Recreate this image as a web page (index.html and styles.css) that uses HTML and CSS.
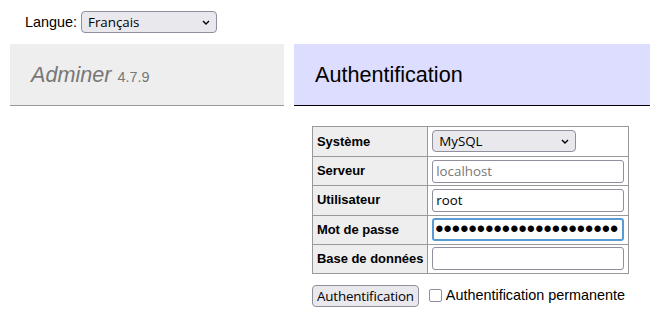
FILE: index.html
```html
<!DOCTYPE html>
<html lang="fr">
<head>
  <meta charset="UTF-8">
  <title>Authentification - Adminer</title>
  <link rel="stylesheet" href="styles.css">
</head>
<body>

  <form class="lang">
    <label for="lang">Langue:</label>
    <span class="select-wrap lang-select">
      <select id="lang"><option>Français</option></select>
      <svg class="chevron" viewBox="0 0 8 5" width="8" height="5"><path d="M1 1l3 3 3-3"/></svg>
    </span>
  </form>

  <div class="page">
    <div id="menu">
      <h1><a id="h1" href="#">Adminer</a> <span class="version">4.7.9</span></h1>
    </div>

    <div id="content">
      <h2>Authentification</h2>
      <form>
        <table class="login">
          <tr>
            <th>Système</th>
            <td>
              <span class="select-wrap driver-select">
                <select name="driver"><option>MySQL</option></select>
                <svg class="chevron" viewBox="0 0 8 5" width="8" height="5"><path d="M1 1l3 3 3-3"/></svg>
              </span>
            </td>
          </tr>
          <tr>
            <th>Serveur</th>
            <td><input class="field" name="server" placeholder="localhost"></td>
          </tr>
          <tr>
            <th>Utilisateur</th>
            <td><input class="field" name="username" value="root"></td>
          </tr>
          <tr>
            <th>Mot de passe</th>
            <td><input class="field focused" type="password" name="password" value="aaaaaaaaaaaaaaaaaaaaaa"></td>
          </tr>
          <tr>
            <th>Base de données</th>
            <td><input class="field" name="db"></td>
          </tr>
        </table>
        <p class="submit-row">
          <input class="btn" type="submit" value="Authentification">
          <label class="permanent"><input class="check" type="checkbox" name="auth[permanent]">Authentification permanente</label>
        </p>
      </form>
    </div>
  </div>

</body>
</html>
```

FILE: styles.css
```css
    :root {
      --menu-bg: #eee;
      --menu-border: #999;
      --head-bg: #ddf;
      --cell-border: #999;
      --ctl-bg: #e9e9ed;
      --ctl-border: #8f8f9d;
      --focus: #5b9bd5;
    }

    body {
      margin: 0;
      font: 14.4px/1.25 "Liberation Sans", Arial, sans-serif;
      color: #000;
      background: #fff;
    }

    .lang {
      display: flex;
      align-items: center;
      gap: 4px;
      height: 44px;
      padding: 0 25px;
      box-sizing: border-box;
    }

    .select-wrap {
      position: relative;
      display: block;
    }

    .select-wrap select {
      appearance: none;
      -webkit-appearance: none;
      display: block;
      width: 100%;
      height: 100%;
      margin: 0;
      padding: 0 20px 0 6px;
      box-sizing: border-box;
      font: 13.33px "Open Sans", "Noto Sans", sans-serif;
      color: #000;
      background: var(--ctl-bg);
      border: 1px solid var(--ctl-border);
      border-radius: 4px;
    }

    .chevron {
      position: absolute;
      top: 50%;
      right: 7px;
      margin-top: -2px;
      fill: none;
      stroke: #000;
      stroke-width: 1.4;
    }

    .lang-select {
      width: 136px;
      height: 22px;
    }

    .page {
      display: flex;
      gap: 10px;
      padding: 0 10px;
    }

    #menu {
      flex: none;
      width: 274px;
    }

    #menu h1 {
      margin: 0;
      padding: 17px 21px;
      font-size: 21.6px;
      line-height: 27px;
      font-weight: normal;
      color: #777;
      background: var(--menu-bg);
      border-bottom: 1px solid var(--menu-border);
    }

    #h1 {
      color: #777;
      font-style: italic;
      text-decoration: none;
    }

    .version {
      font-size: 14.4px;
      line-height: 1;
      color: #777;
    }

    #content {
      flex: 1;
    }

    h2 {
      margin: 0 0 20px;
      padding: 17px 21px;
      font-size: 21.6px;
      line-height: 27px;
      font-weight: normal;
      background: var(--head-bg);
      border-bottom: 1px solid #000;
    }

    .login {
      margin-left: 18px;
      border-collapse: collapse;
      font-size: 12.96px;
      line-height: 1.25;
    }

    .login th,
    .login td {
      border: 1px solid var(--cell-border);
      padding: 2.6px 3.9px;
    }

    .login th {
      background: var(--menu-bg);
      text-align: left;
    }

    .driver-select {
      width: 144px;
      height: 22px;
      margin-bottom: 2px;
    }

    .field {
      display: block;
      width: 192px;
      height: 23px;
      margin: 0;
      padding: 0 3px;
      box-sizing: border-box;
      font: 13.33px "Open Sans", "Noto Sans", sans-serif;
      color: #000;
      background: #fff;
      border: 1px solid var(--ctl-border);
      border-radius: 3px;
      outline: none;
    }

    .field::placeholder {
      color: #777;
    }

    .field.focused {
      border: 2px solid var(--focus);
      padding: 0 2px 0 1px;
      font: 23.5px "Liberation Sans", Arial, sans-serif;
      letter-spacing: 0.1px;
    }

    .submit-row {
      display: flex;
      align-items: center;
      margin: 11px 0 0 18px;
    }

    .btn {
      height: 22px;
      margin: 0 10px 0 0;
      padding: 0 4px;
      font: 13.33px "Open Sans", "Noto Sans", sans-serif;
      letter-spacing: -0.15px;
      color: #000;
      background: var(--ctl-bg);
      border: 1px solid var(--ctl-border);
      border-radius: 4px;
    }

    .permanent {
      display: flex;
      align-items: center;
      padding-bottom: 2px;
    }

    .check {
      appearance: none;
      -webkit-appearance: none;
      width: 13px;
      height: 13px;
      margin: 2px 4px 0 0;
      background: #fff;
      border: 1px solid var(--ctl-border);
      border-radius: 2px;
    }
```
